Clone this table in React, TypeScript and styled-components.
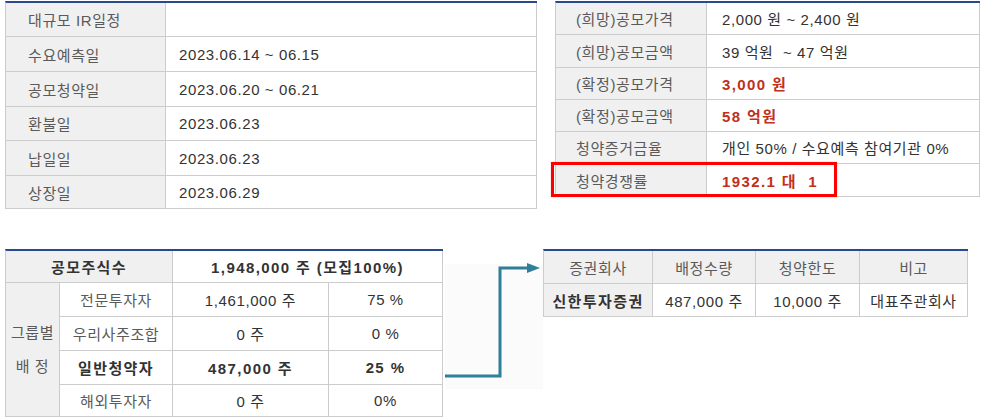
import React from "react";
import styled, { createGlobalStyle } from "styled-components";

const BLUE = "#28498b";
const LINE = "#cccccc";
const HEAD_BG = "#f0f0f0";
const RED = "#c0301c";

const GlobalStyle = createGlobalStyle`
  html, body { margin: 0; padding: 0; background: #fff; }
  body {
    font-family: "Liberation Sans", "Noto Sans CJK KR", sans-serif;
    font-size: 15px;
    color: #333;
  }
`;

const Page = styled.div`
  display: flex;
  flex-direction: column;
  gap: 40px;
  padding: 1px 0 0 5px;
`;

const Row = styled.div<{ $gap: number }>`
  display: flex;
  align-items: flex-start;
  gap: ${(p) => p.$gap}px;
`;

const Table = styled.table<{ $w: number }>`
  width: ${(p) => p.$w}px;
  border-collapse: separate;
  border-spacing: 0;
  table-layout: fixed;
  border-top: 2px solid ${BLUE};
  border-left: 1px solid ${LINE};
`;

const Cell = styled.td<{
  $h?: number;
  $bg?: boolean;
  $align?: "left" | "center";
  $pad?: number;
  $bold?: boolean;
  $red?: boolean;
  $muted?: boolean;
}>`
  height: ${(p) => (p.$h ? `${p.$h}px` : "auto")};
  padding: 0 0 0 ${(p) => p.$pad ?? 0}px;
  box-sizing: border-box;
  border-right: 1px solid ${LINE};
  border-bottom: 1px solid ${LINE};
  background: ${(p) => (p.$bg ? HEAD_BG : "#fff")};
  text-align: ${(p) => p.$align ?? "left"};
  vertical-align: middle;
  white-space: pre;
  font-weight: ${(p) => (p.$bold ? 700 : 400)};
  color: ${(p) => (p.$red ? RED : p.$muted ? "#5a5a5a" : "#333")};
  letter-spacing: ${(p) => (p.$bold ? "1.4px" : "0.6px")};
`;

const GroupCell = styled(Cell)`
  line-height: 34px;
`;

const RedBox = styled.div`
  position: absolute;
  left: -4px;
  top: 161px;
  width: 286px;
  height: 35px;
  box-sizing: border-box;
  border: 3px solid #ff0000;
  box-shadow: 0 0 1px rgba(255, 80, 80, 0.6);
  pointer-events: none;
`;

const RightWrap = styled.div`
  position: relative;
`;

const ArrowBox = styled.div`
  width: 100px;
  height: 140px;
  flex: none;
`;

const Arrow = () => (
  <ArrowBox>
    <svg width="100" height="140" viewBox="0 0 100 140">
      <rect x="2" y="15" width="98" height="125" fill="#fbfbfb" />
      <polyline
        points="2,127 57,127 57,19 86,19"
        fill="none"
        stroke="#2f7f98"
        strokeWidth="3"
      />
      <polygon points="84,14 97,19 84,24" fill="#2f7f98" />
    </svg>
  </ArrowBox>
);

const schedule: [string, string, number][] = [
  ["대규모 IR일정", "", 34],
  ["수요예측일", "2023.06.14 ~ 06.15", 35],
  ["공모청약일", "2023.06.20 ~ 06.21", 35],
  ["환불일", "2023.06.23", 34],
  ["납일일", "2023.06.23", 35],
  ["상장일", "2023.06.29", 33],
];

const prices: { label: string; value: string; h: number; red?: boolean }[] = [
  { label: "(희망)공모가격", value: "2,000 원 ~ 2,400 원", h: 32 },
  { label: "(희망)공모금액", value: "39 억원  ~ 47 억원", h: 33 },
  { label: "(확정)공모가격", value: "3,000 원", h: 32, red: true },
  { label: "(확정)공모금액", value: "58 억원", h: 32, red: true },
  { label: "청약증거금율", value: "개인 50% / 수요예측 참여기관 0%", h: 32 },
];

const groups: { label: string; qty: string; pct: string; bold?: boolean }[] = [
  { label: "전문투자자", qty: "1,461,000 주", pct: "75 %" },
  { label: "우리사주조합", qty: "0 주", pct: "0 %" },
  { label: "일반청약자", qty: "487,000 주", pct: "25 %", bold: true },
  { label: "해외투자자", qty: "0 주", pct: "0%" },
];

const groupHeights = [34, 34, 34, 32];

export default function App() {
  return (
    <>
      <GlobalStyle />
      <Page>
        <Row $gap={18}>
          <Table $w={532}>
            <colgroup>
              <col style={{ width: 160 }} />
              <col style={{ width: 371 }} />
            </colgroup>
            <tbody>
              {schedule.map(([l, v, h]) => (
                <tr key={l}>
                  <Cell $h={h} $bg $pad={22} $muted>
                    {l}
                  </Cell>
                  <Cell $h={h} $pad={13}>
                    {v}
                  </Cell>
                </tr>
              ))}
            </tbody>
          </Table>
          <RightWrap>
            <Table $w={425}>
              <colgroup>
                <col style={{ width: 151 }} />
                <col style={{ width: 273 }} />
              </colgroup>
              <tbody>
                {prices.map((r) => (
                  <tr key={r.label}>
                    <Cell $h={r.h} $bg $pad={20} $muted>
                      {r.label}
                    </Cell>
                    <Cell $h={r.h} $pad={15} $red={r.red} $bold={r.red}>
                      {r.value}
                    </Cell>
                  </tr>
                ))}
                <tr>
                  <Cell $h={33} $bg $pad={20} $muted>
                    청약경쟁률
                  </Cell>
                  <Cell $h={33} $pad={15} $red $bold>
                    {"1932.1 대  1"}
                  </Cell>
                </tr>
              </tbody>
            </Table>
            <RedBox />
          </RightWrap>
        </Row>
        <Row $gap={0}>
          <Table $w={438}>
            <colgroup>
              <col style={{ width: 54 }} />
              <col style={{ width: 113 }} />
              <col style={{ width: 156 }} />
              <col style={{ width: 114 }} />
            </colgroup>
            <tbody>
              <tr>
                <Cell $h={32} $bg $bold $align="center" colSpan={2}>
                  공모주식수
                </Cell>
                <Cell $h={32} $bold $align="center" colSpan={2}>
                  1,948,000 주 (모집100%)
                </Cell>
              </tr>
              {groups.map((g, i) => (
                <tr key={g.label}>
                  {i === 0 && (
                    <GroupCell $bg $align="center" rowSpan={4} $muted>
                      그룹별
                      <br />배 정
                    </GroupCell>
                  )}
                  <Cell $h={groupHeights[i]} $align="center" $bold={g.bold} $muted={!g.bold}>
                    {g.label}
                  </Cell>
                  <Cell $h={groupHeights[i]} $align="center" $bold={g.bold}>
                    {g.qty}
                  </Cell>
                  <Cell $h={groupHeights[i]} $align="center" $bold={g.bold}>
                    {g.pct}
                  </Cell>
                </tr>
              ))}
            </tbody>
          </Table>
          <Arrow />
          <Table $w={425}>
            <colgroup>
              <col style={{ width: 109 }} />
              <col style={{ width: 103 }} />
              <col style={{ width: 104 }} />
              <col style={{ width: 108 }} />
            </colgroup>
            <tbody>
              <tr>
                <Cell $h={33} $bg $align="center" $muted>증권회사</Cell>
                <Cell $h={33} $bg $align="center" $muted>배정수량</Cell>
                <Cell $h={33} $bg $align="center" $muted>청약한도</Cell>
                <Cell $h={33} $bg $align="center" $muted>비고</Cell>
              </tr>
              <tr>
                <Cell $h={33} $bg $align="center" $bold>신한투자증권</Cell>
                <Cell $h={33} $align="center">487,000 주</Cell>
                <Cell $h={33} $align="center">10,000 주</Cell>
                <Cell $h={33} $align="center">대표주관회사</Cell>
              </tr>
            </tbody>
          </Table>
        </Row>
      </Page>
    </>
  );
}
